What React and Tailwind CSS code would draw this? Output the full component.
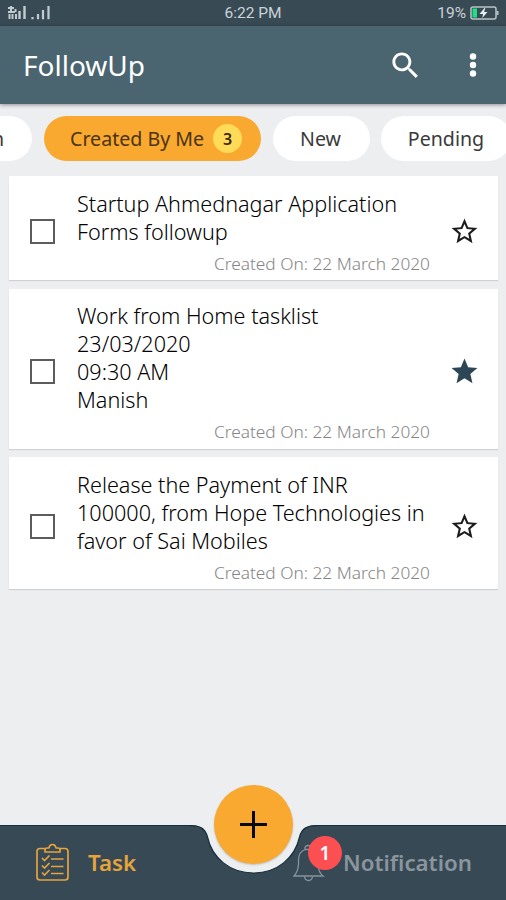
import React from "react";

const tasks = [
  { lines: ["Startup Ahmednagar Application", "Forms followup"], starred: false },
  { lines: ["Work from Home tasklist", "23/03/2020", "09:30 AM", "Manish"], starred: true },
  {
    lines: ["Release the Payment of INR", "100000, from Hope Technologies in", "favor of Sai Mobiles"],
    starred: false,
  },
];

function StatusBar() {
  return (
    <div className="grid h-[26px] grid-cols-3 items-center bg-[#384a54] px-[7px] font-[Roboto,sans-serif] text-[#cbd3d8]">
      <svg width="44" height="16" viewBox="0 0 44 16" fill="none" stroke="#c3cbd0">
        <path d="M1 3h6M4 1v6M1 7h7M2.500 9v5M5.500 9v5M8.500 4v3M9 9v5" strokeWidth="2" />
        <path d="M12.500 6v8M17.500 1v13" strokeWidth="2.400" />
        <path d="M25.500 12v2.300M31 9v5.300M36 5v9.300M41.500 1v13.300" strokeWidth="2.200" />
      </svg>
      <span className="pt-[2px] text-center text-[15.500px]">6:22 PM</span>
      <div className="flex items-center justify-end gap-[4px]">
        <span className="pt-[2px] text-[15.500px]">19%</span>
        <svg width="29" height="14" viewBox="0 0 29 14" fill="none">
          <rect x="1" y="1" width="25" height="12" rx="2" stroke="#b9c2c7" strokeWidth="1.500" />
          <path d="M2.500 2.500h4.500v9h-4.500z" fill="#1fe084" />
          <path d="M27.500 5v4" stroke="#b9c2c7" strokeWidth="2" />
          <path d="M14.500 2 9.500 8h3.500l-.7 4 5.200-6h-3.400l1.200-4z" fill="#e6edf0" />
        </svg>
      </div>
    </div>
  );
}

function Header() {
  return (
    <header className="relative z-10 flex h-[78px] items-center bg-[#4a6570] pr-[18px] pl-[23px] text-white shadow-[0_1px_4px_rgba(0,0,0,0.4)]">
      <h1 className="flex-1 pb-[1px] text-[28px]">FollowUp</h1>
      <svg className="mr-[35px]" width="35" height="35" viewBox="0 0 24 24" fill="#fff">
        <path d="M15.500 14h-.79l-.28-.27C15.410 12.590 16 11.110 16 9.500 16 5.910 13.090 3 9.500 3S3 5.910 3 9.500 5.910 16 9.500 16c1.610 0 3.090-.59 4.230-1.570l.27.28v.79l5 4.990L20.490 19l-4.990-5zm-6 0C7.010 14 5 11.990 5 9.500S7.010 5 9.500 5 14 7.010 14 9.500 11.990 14 9.500 14z" />
      </svg>
      <svg width="30" height="30" viewBox="0 0 30 30" fill="#fff">
        <circle cx="15" cy="6.500" r="3.200" />
        <circle cx="15" cy="15" r="3.200" />
        <circle cx="15" cy="23.500" r="3.200" />
      </svg>
    </header>
  );
}

function Filters() {
  return (
    <div className="flex h-[72px] gap-3 overflow-hidden pt-[12px] text-[19.600px] text-[#3a3a3a]">
      <div className="flex h-[45px] w-[32px] shrink-0 items-center justify-end overflow-hidden rounded-r-full bg-white pt-[1px] pr-[28px]">
        <span>n</span>
      </div>
      <div className="flex h-[45px] w-[217px] shrink-0 items-center rounded-full bg-[#f9a830] pl-[26px] text-[#4a3410]">
        <span className="w-[143px] pt-[1px] whitespace-nowrap">Created By Me</span>
        <span className="flex size-[29px] items-center justify-center rounded-full bg-[#ffdb57] text-[16px] font-semibold text-[#3b290c]">
          3
        </span>
      </div>
      <div className="flex h-[45px] w-[97px] shrink-0 items-center justify-center rounded-full bg-white pt-[1px] pr-[2px]">New</div>
      <div className="-ml-px flex h-[45px] w-[130px] shrink-0 items-center justify-center rounded-full bg-white pt-[1px]">Pending</div>
    </div>
  );
}

function Star({ filled }) {
  return (
    <svg width="31" height="31" viewBox="0 0 24 24">
      {filled ? (
        <path
          fill="#2c4656"
          d="M12 17.270 18.180 21l-1.640-7.030L22 9.240l-7.190-.61L12 2 9.190 8.630 2 9.240l5.460 4.730L5.820 21z"
        />
      ) : (
        <path
          fill="#1c1c1c"
          d="M22 9.240l-7.190-.62L12 2 9.190 8.630 2 9.240l5.460 4.730L5.820 21 12 17.270 18.180 21l-1.630-7.030L22 9.240zM12 15.400l-3.760 2.270 1-4.280-3.320-2.880 4.380-.38L12 6.100l1.710 4.040 4.380.38-3.320 2.880 1 4.280L12 15.400z"
        />
      )}
    </svg>
  );
}

function TaskCard({ task }) {
  return (
    <article className="flex items-center bg-white pr-[18px] pl-[21px] shadow-[0_1px_1px_rgba(0,0,0,0.12)]">
      <span className="mt-[6px] size-[25px] shrink-0 border-2 border-[#5c5c5c]" />
      <div className="ml-[22px] w-[353px] shrink-0 pt-[13.500px]">
        {task.lines.map((line) => (
          <p key={line} className="h-7 text-[21.600px] leading-7 font-light whitespace-nowrap text-black">
            {line}
          </p>
        ))}
        <p className="h-[34.500px] text-right text-[17.300px] leading-[35px] font-light text-[#858585]">
          Created On: 22 March 2020
        </p>
      </div>
      <span className="mt-[6px] ml-auto">
        <Star filled={task.starred} />
      </span>
    </article>
  );
}

function BottomNav() {
  return (
    <nav className="relative h-[75px] font-semibold">
      <svg className="absolute inset-0" width="506" height="75" viewBox="0 0 506 75">
        <path
          d="M0 0H188C200 0 205 3 207.500 12C212 33 230 48 253.500 48C277 48 295 33 299.500 12C302 3 307 0 319 0H506V75H0Z"
          fill="#364955"
        />
        <path
          d="M0 .5H188C200 .5 205 3 207.500 12C212 33 230 48 253.500 48C277 48 295 33 299.500 12C302 3 307 .5 319 .5H506"
          fill="none"
          stroke="#172e3e"
          strokeWidth="1.200"
        />
      </svg>
      <button
        aria-label="Add"
        className="absolute top-[-40px] left-[214px] flex size-[79px] items-center justify-center rounded-full bg-[#f9a830] shadow-[0_1px_2px_rgba(0,0,0,0.2)]"
      >
        <svg width="27" height="27" viewBox="0 0 27 27" stroke="#080808" strokeWidth="3">
          <path d="M13.500 0v27M0 13.500h27" />
        </svg>
      </button>
      <div className="relative flex h-full items-center text-[22.300px]">
        <svg className="ml-[35px]" width="35" height="39" viewBox="0 0 35 39" fill="none" stroke="#e6a43c" strokeWidth="1.700">
          <path d="M10 5.500H5a3 3 0 0 0-3 3V34a3 3 0 0 0 3 3h25a3 3 0 0 0 3-3V8.500a3 3 0 0 0-3-3h-5" />
          <path d="M10 9V7q0-2 2-2h2q.5-3.500 3.500-3.500T21 5h2q2 0 2 2v2z" strokeLinejoin="round" />
          <path d="m7 15 2.500 2.500 5-5M7 22.500 9.500 25l5-5M7 29.500 9.500 32l5-5M16 16h12.500M16 23.500h12.500M16 30.500h12.500" />
        </svg>
        <span className="ml-[18px] w-[49px] text-[#e6a43c]">Task</span>
        <div className="relative ml-[156px] h-[38px] w-[32px]">
          <svg width="32" height="38" viewBox="0 0 32 38" fill="none" stroke="#87929b" strokeWidth="1.300">
            <path d="M1 32q4-4 4.500-12V16q0-8 6.500-10.500h6q7 2.500 7 10.500v4.500q.5 8 5 11.500z" />
            <path d="M12 5.500V4q0-2.500 3-2.500T18 4v1.500M11.500 32.500q.5 4 4 4t4-4" />
          </svg>
          <span className="absolute top-[-8px] left-[15px] flex size-[34px] items-center justify-center rounded-full bg-[#fb4f52] pt-[2px] text-[19px] text-white">
            1
          </span>
        </div>
        <span className="ml-[18px] text-[#8b959d]">Notification</span>
      </div>
    </nav>
  );
}

export default function App() {
  return (
    <div className="flex h-[900px] w-[506px] flex-col overflow-hidden bg-[#eceef0] font-['Noto_Sans',sans-serif]">
      <StatusBar />
      <Header />
      <Filters />
      <main className="flex flex-1 flex-col gap-[8.500px] pr-2 pl-[9px]">
        {tasks.map((task) => (
          <TaskCard key={task.lines[0]} task={task} />
        ))}
      </main>
      <BottomNav />
    </div>
  );
}
